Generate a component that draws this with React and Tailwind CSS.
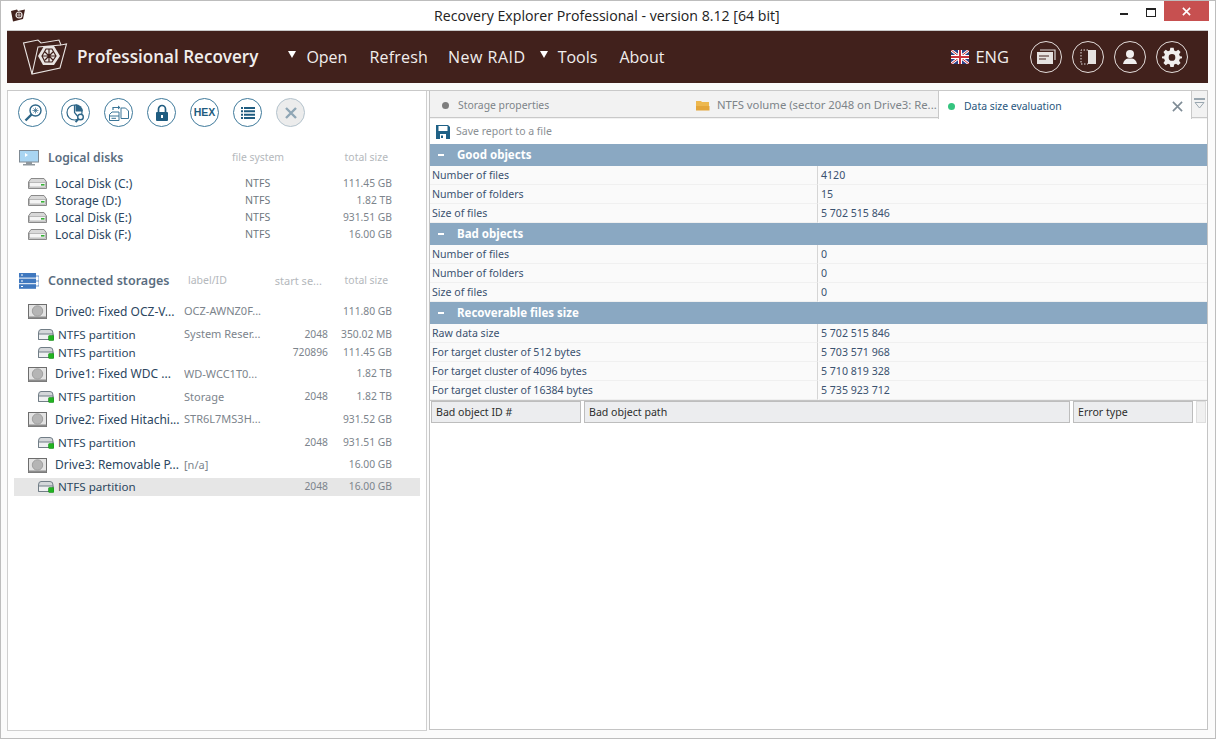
import React from 'react';

const logicalDisks = [
    { name: 'Local Disk (C:)', fs: 'NTFS', size: '111.45 GB' },
    { name: 'Storage (D:)', fs: 'NTFS', size: '1.82 TB' },
    { name: 'Local Disk (E:)', fs: 'NTFS', size: '931.51 GB' },
    { name: 'Local Disk (F:)', fs: 'NTFS', size: '16.00 GB' },
];

const storages = [
    { drive: true, name: 'Drive0: Fixed OCZ-V...', label: 'OCZ-AWNZ0F...', size: '111.80 GB', h: 'h-[25px]' },
    { name: 'NTFS partition', label: 'System Reser...', start: '2048', size: '350.02 MB', h: 'h-[21px]' },
    { name: 'NTFS partition', label: '', start: '720896', size: '111.45 GB', h: 'h-[16px]' },
    { drive: true, name: 'Drive1: Fixed WDC ...', label: 'WD-WCC1T0...', size: '1.82 TB', h: 'mt-[1px] h-[24px]' },
    { name: 'NTFS partition', label: 'Storage', start: '2048', size: '1.82 TB', h: 'h-[22px]' },
    { drive: true, name: 'Drive2: Fixed Hitachi...', label: 'STR6L7MS3H...', size: '931.52 GB', h: 'h-[23px]' },
    { name: 'NTFS partition', label: '', start: '2048', size: '931.51 GB', h: 'h-[23px]' },
    { drive: true, name: 'Drive3: Removable P...', label: '[n/a]', size: '16.00 GB', h: 'h-[22px]' },
    { name: 'NTFS partition', label: '', start: '2048', size: '16.00 GB', h: 'mt-[2px] h-[18px]', selected: true },
];

const sections = [
    {
        title: 'Good objects',
        rows: [['Number of files', '4120'], ['Number of folders', '15'], ['Size of files', '5 702 515 846']],
    },
    {
        title: 'Bad objects',
        rows: [['Number of files', '0'], ['Number of folders', '0'], ['Size of files', '0']],
    },
    {
        title: 'Recoverable files size',
        rows: [
            ['Raw data size', '5 702 515 846'],
            ['For target cluster of 512 bytes', '5 703 571 968'],
            ['For target cluster of 4096 bytes', '5 710 819 328'],
            ['For target cluster of 16384 bytes', '5 735 923 712'],
        ],
    },
];

function FolderLogo({ className }) {
    return (
        <svg viewBox="0 0 46 38" className={className} fill="none" stroke="#e9e4e2" strokeWidth="1.1">
            <path d="M10 36 L1.5 5 L16 2 L19 5 L37 2 L39 7 L44.5 6 L38 30 Z" />
            <path d="M10 36 L16 9 L39 7" />
            <path d="M22 8 L32 8 L38 18 L32 27 L21 27 L16 18 Z" fill="#e9e4e2" stroke="none" />
            <path d="M24 11 L30 11 L34 18 L30 24 L23 24 L20 18 Z M27 11 V24 M20 18 H34 M23 14 L31 22 M31 14 L23 22" stroke="#41211c" strokeWidth="1.2" />
        </svg>
    );
}

function LogicalDiskIcon() {
    return (
        <svg viewBox="0 0 19 11" className="h-[11px] w-[19px] shrink-0">
            <path d="M3 .5 H16 L18.5 4 V10.5 H.5 V4 Z" fill="#d8d8d8" stroke="#8a8a8a" />
            <rect x="1.5" y="4.5" width="16" height="4.5" fill="#f4f4f4" stroke="#9a9a9a" strokeWidth=".6" />
            <rect x="13" y="6" width="3.5" height="1.6" fill="#35b035" />
        </svg>
    );
}

function DriveIcon() {
    return (
        <svg viewBox="0 0 19 15" className="h-[15px] w-[19px] shrink-0">
            <rect x=".5" y=".5" width="18" height="14" fill="#e3e3e3" stroke="#6d6d6d" />
            <rect x=".5" y="12.5" width="18" height="2" fill="#8c8c8c" />
            <circle cx="9.5" cy="7" r="5.2" fill="#b5b5b5" stroke="#a0a0a0" />
        </svg>
    );
}

function PartitionIcon() {
    return (
        <svg viewBox="0 0 16 12" className="h-[12px] w-[16px] shrink-0">
            <path d="M3 .5 H12 Q15 .5 15 4 V10.5 H.5 V4 Q.5 .5 3 .5 Z" fill="#d4d7da" stroke="#717d86" />
            <path d="M.5 5 H15 V10.5 H.5 Z" fill="#eef0f1" stroke="#717d86" />
            <rect x="10.5" y="6.5" width="5.5" height="5" rx="1" fill="#22b322" stroke="#0f7f0f" strokeWidth=".5" />
        </svg>
    );
}

// round toolbar buttons under the menu
function ToolButton({ disabled, children }) {
    return (
        <div className={`flex h-[29px] w-[29px] shrink-0 items-center justify-center rounded-full border ${disabled ? 'border-[#b4c3cd] bg-[#ececec]' : 'border-[#3f7a9b] bg-white'}`}>
            {children}
        </div>
    );
}

function HeaderButton({ children }) {
    return (
        <div className="flex h-[32px] w-[32px] items-center justify-center rounded-full border border-[#e3dcda]">
            {children}
        </div>
    );
}

function MenuItem({ label, arrow, className = '' }) {
    return (
        <div className={`flex items-center ${className}`}>
            {arrow && <span className="mr-[10px] h-0 w-0 -translate-y-[3px] border-x-[4px] border-t-[7px] border-x-transparent border-t-white" />}
            <span>{label}</span>
        </div>
    );
}

function Section({ title, rows }) {
    return (
        <div>
            <div className="flex h-[22px] items-center bg-[#8aa8c2] text-[11.5px] font-bold text-white">
                <span className="ml-[8px] h-[2px] w-[6px] bg-white" />
                <span className="ml-[13px]">{title}</span>
            </div>
            {rows.map(([label, value], i) => (
                <div key={i} className="grid h-[19px] grid-cols-[388px_1fr] bg-[#fafafa] text-[#3a5270]">
                    <div className="truncate border-r border-[#d5d5d5] border-b border-b-[#f0f0f0] pl-[2px] leading-[18px]">{label}</div>
                    <div className="ml-[1px] border-b border-[#f0f0f0] pl-[2px] leading-[18px]">{value}</div>
                </div>
            ))}
        </div>
    );
}

export default function App() {
    return (
        <div className="flex h-[739px] w-[1216px] flex-col overflow-hidden border border-[#bdbdbd] bg-[#fbfbfb] font-['Noto_Sans','Liberation_Sans',sans-serif] text-[10.6px]">
            {/* title bar */}
            <div className="flex h-[29px] shrink-0 items-start bg-white">
                <svg viewBox="0 0 16 14" className="ml-[9px] mt-[7px] h-[14px] w-[16px]">
                    <path d="M1 3 L7 1.5 L8 3 L15 1.5 L13 11 L3 13.5 Z" fill="#41211c" />
                    <circle cx="9" cy="7" r="3" fill="none" stroke="#e9e4e2" strokeWidth="1.2" />
                    <path d="M6 7 H12 M9 4 V10" stroke="#e9e4e2" strokeWidth=".7" />
                </svg>
                <div className="ml-[408px] mt-[5px] font-['Open_Sans'] text-[14.15px] leading-[20px] text-[#222]">Recovery Explorer Professional - version 8.12 [64 bit]</div>
                <div className="ml-auto flex items-start">
                    <span className="mt-[12px] h-[2px] w-[8px] bg-[#222]" />
                    <span className="ml-[18px] mt-[7px] h-[9px] w-[10px] border border-t-2 border-[#222]" />
                    <div className="ml-[8px] mr-[6px] flex h-[20px] w-[45px] items-center justify-center bg-[#c75050]">
                        <svg viewBox="0 0 10 10" className="h-[9px] w-[9px]" stroke="white" strokeWidth="1.8"><path d="M1 1 L9 9 M9 1 L1 9" /></svg>
                    </div>
                </div>
            </div>

            {/* brown header */}
            <div className="ml-[6px] mr-[7px] flex h-[53px] shrink-0 items-center border-t border-[#c9c9c9] bg-[#41211c] font-['Open_Sans'] text-[16px] text-[#f1eeed]">
                <FolderLogo className="ml-[15px] h-[38px] w-[46px]" />
                <div className="ml-[9px] text-[17.1px] font-semibold">Professional Recovery</div>
                <MenuItem label="Open" arrow className="ml-[30px]" />
                <MenuItem label="Refresh" className="ml-[22px] tracking-[0.2px]" />
                <MenuItem label="New RAID" className="ml-[20px] tracking-[0.5px]" />
                <MenuItem label="Tools" arrow className="ml-[14px]" />
                <MenuItem label="About" className="ml-[22px]" />
                <div className="ml-auto flex items-center">
                    <svg viewBox="0 0 18 14" className="h-[14px] w-[18px]">
                        <rect width="18" height="14" fill="#2b3f86" />
                        <path d="M0 0 L18 14 M18 0 L0 14" stroke="#fff" strokeWidth="2.6" />
                        <path d="M0 0 L18 14 M18 0 L0 14" stroke="#c8303c" strokeWidth="1" />
                        <path d="M9 0 V14 M0 7 H18" stroke="#fff" strokeWidth="4" />
                        <path d="M9 0 V14 M0 7 H18" stroke="#c8303c" strokeWidth="2" />
                    </svg>
                    <span className="ml-[6px] text-[16.5px]">ENG</span>
                    <div className="ml-[21px] mr-[20px] flex gap-[10px]">
                        <HeaderButton>
                            <svg viewBox="0 0 20 16" className="h-[16px] w-[20px]">
                                <path d="M4 1 H19 V11" fill="none" stroke="#dcd8d6" strokeWidth="1.2" />
                                <rect x="1" y="3" width="16" height="12" fill="#e6e2e0" />
                                <path d="M3 7 H13 M3 10 H10" stroke="#41211c" strokeWidth="1.2" />
                            </svg>
                        </HeaderButton>
                        <HeaderButton>
                            <svg viewBox="0 0 17 16" className="h-[16px] w-[17px]">
                                <rect x="8" y="1" width="8" height="14" fill="#e6e2e0" />
                                <path d="M8 1 H1 V15 H8" fill="none" stroke="#e6e2e0" strokeWidth="1" strokeDasharray="1.5 1.5" />
                            </svg>
                        </HeaderButton>
                        <HeaderButton>
                            <svg viewBox="0 0 16 16" className="h-[16px] w-[16px]" fill="#f1eeed">
                                <circle cx="8" cy="5" r="4" />
                                <path d="M1 15 Q2 10 6 9.5 H10 Q14 10 15 15 Z" />
                            </svg>
                        </HeaderButton>
                        <HeaderButton>
                            <svg viewBox="0 0 24 24" className="h-[20px] w-[20px]" fill="#f1eeed">
                                <path d="M10 1 H14 L14.6 4.2 L16.8 5.1 L19.5 3.3 L22.3 6.1 L20.5 8.8 L21.4 11 L24 11.4 V13.6 L21.4 14.2 L20.5 16.4 L22.3 19.1 L19.5 21.9 L16.8 20.1 L14.6 21 L14 24 H10 L9.4 21 L7.2 20.1 L4.5 21.9 L1.7 19.1 L3.5 16.4 L2.6 14.2 L0 13.6 V11.4 L2.6 11 L3.5 8.8 L1.7 6.1 L4.5 3.3 L7.2 5.1 L9.4 4.2 Z M12 8.5 A4 4 0 1 0 12 16.5 A4 4 0 1 0 12 8.5 Z" fillRule="evenodd" />
                            </svg>
                        </HeaderButton>
                    </div>
                </div>
            </div>

            {/* work area */}
            <div className="ml-[6px] mr-[7px] mt-[7px] flex h-[641px] border-t border-[#c9c9c9]">
                {/* left panel */}
                <div className="h-[640px] w-[420px] shrink-0 border-x border-b border-[#cfcfcf] bg-white">
                    <div className="ml-[10px] mt-[7px] flex gap-[14px]">
                        <ToolButton>
                            <svg viewBox="0 0 20 20" className="h-[20px] w-[20px]" fill="none" stroke="#2e6688">
                                <circle cx="12.5" cy="7.5" r="5.5" strokeWidth="1.4" />
                                <path d="M8.5 11.5 L2.5 17.5" strokeWidth="2.4" />
                                <path d="M12.5 4.5 V10.5 M9.5 7.5 H15.5 M10.5 5.5 L14.5 9.5 M14.5 5.5 L10.5 9.5" strokeWidth=".7" />
                            </svg>
                        </ToolButton>
                        <ToolButton>
                            <svg viewBox="0 0 22 22" className="h-[22px] w-[22px]" fill="none" stroke="#2e6688" strokeWidth="1.2">
                                <circle cx="9.5" cy="10.5" r="7.5" />
                                <path d="M10.5 2 A8 8 0 0 1 18 9.5 H10.5 Z" fill="#2e6688" stroke="none" />
                                <path d="M9.5 3 V10.5 L14 16" />
                                <circle cx="15.5" cy="15" r="2.8" fill="#fff" strokeWidth="1.4" />
                                <path d="M13.5 17 L10.5 20" strokeWidth="2" />
                            </svg>
                        </ToolButton>
                        <ToolButton>
                            <svg viewBox="0 0 22 18" className="h-[18px] w-[22px]" fill="none" stroke="#3a7597" strokeWidth="1">
                                <path d="M1.5 16.5 V10.5 L4 8 H11 V16.5 Z M1.5 12 H11 M3.5 14.3 H8" />
                                <path d="M13 4 H17.5 L20.5 7 V14.5 H13 Z" />
                                <path d="M5 6 V3.5 H10" strokeWidth="1.2" />
                                <path d="M10 1.5 L12.5 3.5 L10 5.5 Z" fill="#3a7597" stroke="none" />
                            </svg>
                        </ToolButton>
                        <ToolButton>
                            <svg viewBox="0 0 14 18" className="h-[18px] w-[14px]">
                                <path d="M3.5 9 V5 A3.5 3.5 0 0 1 10.5 5 V9" fill="none" stroke="#1f5c80" strokeWidth="1.7" />
                                <rect x="1" y="8" width="12" height="9" rx="1" fill="#1f5c80" />
                                <rect x="6" y="11" width="2" height="3" fill="#fff" />
                            </svg>
                        </ToolButton>
                        <ToolButton>
                            <span className="font-['Liberation_Sans'] text-[10.5px] font-bold text-[#1f5c80]">HEX</span>
                        </ToolButton>
                        <ToolButton>
                            <svg viewBox="0 0 14 12" className="h-[12px] w-[14px]" fill="#1f5c80">
                                <path d="M0 0 H2 V2 H0 Z M3 0 H14 V2 H3 Z M0 3.3 H2 V5.3 H0 Z M3 3.3 H14 V5.3 H3 Z M0 6.7 H2 V8.7 H0 Z M3 6.7 H14 V8.7 H3 Z M0 10 H2 V12 H0 Z M3 10 H14 V12 H3 Z" />
                            </svg>
                        </ToolButton>
                        <ToolButton disabled>
                            <svg viewBox="0 0 12 12" className="h-[12px] w-[12px]" stroke="#8fa6b5" strokeWidth="2.4"><path d="M1 1 L11 11 M11 1 L1 11" /></svg>
                        </ToolButton>
                    </div>

                    {/* logical disks */}
                    <div className="ml-[11px] mt-[22px] flex h-[18px] items-center">
                        <svg viewBox="0 0 20 16" className="h-[16px] w-[20px] shrink-0">
                            <rect x=".5" y=".5" width="19" height="11.5" fill="#a9d5f2" stroke="#7f8a94" />
                            <path d="M6 3 L9 5 L6 7 Z" fill="#fff" />
                            <path d="M7 12 H13 V14 H16 V15.5 H4 V14 H7 Z" fill="#8f979d" />
                        </svg>
                        <span className="ml-[9px] w-[184px] shrink-0 text-[12.2px] font-semibold text-[#5a6d80]">Logical disks</span>
                        <span className="text-[10.4px] text-[#b4b8bc]">file system</span>
                        <span className="ml-auto mr-[38px] text-[10.4px] text-[#b4b8bc]">total size</span>
                    </div>
                    <div className="mt-[8px]">
                        {logicalDisks.map((disk) => (
                            <div key={disk.name} className="flex h-[17px] items-center pl-[20px] pr-[34px]">
                                <LogicalDiskIcon />
                                <span className="ml-[8px] w-[190px] shrink-0 text-[12px] text-[#2c4660]">{disk.name}</span>
                                <span className="text-[#6e7780]">{disk.fs}</span>
                                <span className="ml-auto text-[10.3px] text-[#7c848c]">{disk.size}</span>
                            </div>
                        ))}
                    </div>

                    {/* connected storages */}
                    <div className="ml-[11px] mt-[29px] flex h-[18px] items-center">
                        <svg viewBox="0 0 20 16" className="h-[16px] w-[20px] shrink-0">
                            <path d="M17 3 H20 V13 H17 M17 8 H20" fill="none" stroke="#4a7cbc" strokeWidth=".8" />
                            <rect x="0" y="0" width="17" height="4.6" fill="#3f78bf" />
                            <rect x="0" y="5.6" width="17" height="4.6" fill="#3f78bf" />
                            <rect x="0" y="11.2" width="17" height="4.6" fill="#3f78bf" />
                            <path d="M2 2 H4 M2 8 H4 M2 13.5 H4" stroke="#fff" />
                        </svg>
                        <span className="ml-[9px] w-[140px] shrink-0 text-[12.5px] font-semibold text-[#5a6d80]">Connected storages</span>
                        <span className="text-[10.5px] text-[#b4b8bc]">label/ID</span>
                        <span className="ml-[48px] text-[11px] text-[#b4b8bc]">start se...</span>
                        <span className="ml-auto mr-[38px] text-[10.4px] text-[#b4b8bc]">total size</span>
                    </div>
                    <div className="mt-[9px]">
                        {storages.map((item, i) => (
                            <div key={i} className={`mx-[6px] flex items-center pr-[28px] ${item.drive ? 'pl-[14px]' : 'pl-[24px]'} ${item.h} ${item.selected ? 'bg-[#e6e6e6]' : ''}`}>
                                {item.drive ? <DriveIcon /> : <PartitionIcon />}
                                <span className={`shrink-0 truncate text-[#2c4660] ${item.drive ? 'ml-[8px] w-[129px] text-[12px]' : 'ml-[4px] w-[126px] text-[11.6px]'}`}>{item.name}</span>
                                <span className="w-[90px] shrink-0 truncate text-[11px] text-[#7c848c]">{item.label}</span>
                                <span className="w-[54px] shrink-0 text-right text-[10.3px] text-[#7c848c]">{item.start}</span>
                                <span className="ml-auto text-[10.3px] text-[#7c848c]">{item.size}</span>
                            </div>
                        ))}
                    </div>
                </div>

                {/* right panel */}
                <div className="ml-[2px] flex h-[639px] min-w-0 flex-1 flex-col border-x border-b border-[#c4c4c4] bg-white">
                    {/* tabs */}
                    <div className="flex h-[28px] shrink-0 bg-[#f2f2f2] text-[10.4px]">
                        <div className="flex h-[27px] flex-1 items-center border-b border-[#c9c9c9] pt-[3px] text-[#7d8489]">
                            <span className="ml-[12px] h-[7px] w-[7px] rounded-full bg-[#7e7e7e]" />
                            <span className="ml-[9px] w-[238px] shrink-0">Storage properties</span>
                            <svg viewBox="0 0 14 11" className="h-[11px] w-[14px] shrink-0">
                                <path d="M0 1 H5 L6 2 H13 V10 H0 Z" fill="#edb84f" />
                                <rect x="0" y="6" width="13.5" height="4.5" fill="#e4a63a" />
                            </svg>
                            <span className="ml-[7px] truncate text-[11.3px]">NTFS volume (sector 2048 on Drive3: Re...</span>
                        </div>
                        <div className="flex h-[28px] w-[254px] shrink-0 items-center border-x border-[#c9c9c9] bg-white pt-[3px] text-[#28567d]">
                            <span className="ml-[9px] h-[7px] w-[7px] rounded-full bg-[#35c47f]" />
                            <span className="ml-[9px]">Data size evaluation</span>
                            <svg viewBox="0 0 12 12" className="ml-auto mr-[8px] h-[11px] w-[11px]" stroke="#7f8c96" strokeWidth="1.8"><path d="M1 1 L11 11 M11 1 L1 11" /></svg>
                        </div>
                        <div className="flex h-[27px] w-[15px] shrink-0 justify-center border-b border-[#c9c9c9] pt-[7px]">
                            <svg viewBox="0 0 11 11" className="h-[11px] w-[11px]" fill="none" stroke="#9aa7b0">
                                <path d="M0 1 H11" strokeWidth="2" />
                                <path d="M1 4.5 H10 L5.5 10 Z" />
                            </svg>
                        </div>
                    </div>

                    {/* save report */}
                    <div className="flex h-[25px] shrink-0 items-center text-[10.5px] text-[#8a8f94]">
                        <svg viewBox="0 0 14 14" className="ml-[6px] h-[14px] w-[14px]">
                            <path d="M0 0 H12 L14 2 V14 H0 Z" fill="#1f6186" />
                            <rect x="2.5" y="1" width="9" height="5" fill="#fff" />
                            <rect x="4" y="9" width="6" height="5" fill="#fff" />
                            <rect x="5" y="10.5" width="2" height="2.5" fill="#1f6186" />
                        </svg>
                        <span className="ml-[6px]">Save report to a file</span>
                    </div>

                    {sections.map((section) => (
                        <Section key={section.title} title={section.title} rows={section.rows} />
                    ))}

                    {/* bad object list */}
                    <div className="flex h-[23px] shrink-0 gap-[3px] border-t border-[#c4c4c4] pl-[1px] text-[#2d2d2d]">
                        <div className="flex w-[150px] items-center border border-[#bdbdbd] bg-[#ecedef] pl-[4px] pt-[1px]">Bad object ID #</div>
                        <div className="flex w-[486px] items-center border border-[#bdbdbd] bg-[#ecedef] pl-[4px] pt-[1px]">Bad object path</div>
                        <div className="flex w-[120px] items-center border border-[#bdbdbd] bg-[#ecedef] pl-[4px] pt-[1px]">Error type</div>
                        <div className="w-[10px] border border-[#dedede] bg-[#f0f0f0]" />
                    </div>
                    <div className="flex-1 bg-white" />
                </div>
            </div>
        </div>
    );
}
